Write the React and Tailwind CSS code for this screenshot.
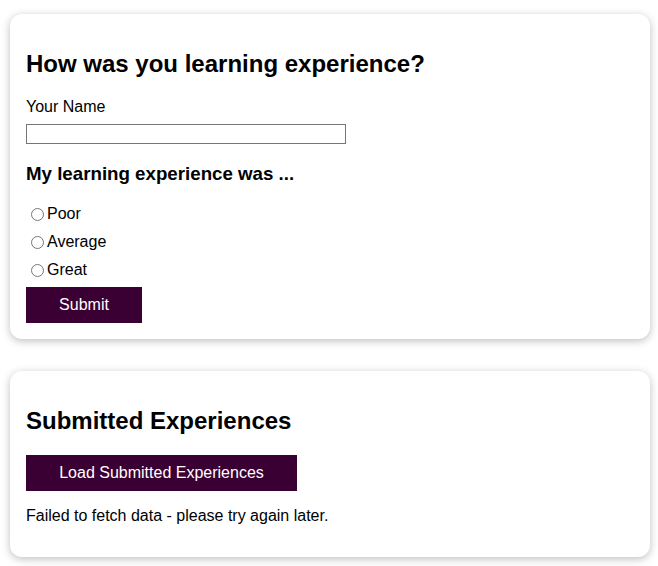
import React, { useState } from 'react';

const Card = ({ children, className = '' }) => (
  <section className={`rounded-xl bg-white px-4 pt-4 pb-4 shadow-[0_2px_8px_rgba(0,0,0,0.26)] ${className}`}>
    {children}
  </section>
);

const App = () => {
  const [name, setName] = useState('');
  const [rating, setRating] = useState('');

  return (
    <div className="min-h-[566px] bg-white pl-[10px] pr-[8px] pt-[14px] text-black font-['Liberation_Sans',Arial,sans-serif]">
      {/* FEEDBACK FORM */}
      <Card>
        <form onSubmit={e => e.preventDefault()}>
          <h2 className="mt-5 mb-5 text-2xl font-bold leading-[27.6px]">How was you learning experience?</h2>
          <label htmlFor="name" className="mb-2 block text-base leading-[18.4px]">Your Name</label>
          <input
            id="name"
            type="text"
            value={name}
            onChange={e => setName(e.target.value)}
            className="block h-5 w-[320px] border border-[#767676] px-0.5 text-sm outline-none"
          />
          <h3 className="mt-[18.7px] mb-4 text-[18.72px] font-bold leading-[21.5px]">My learning experience was ...</h3>
          {['Poor', 'Average', 'Great'].map(opt => (
            <div key={opt} className="flex h-7 items-center">
              <input
                type="radio"
                id={opt}
                name="rating"
                value={opt}
                checked={rating === opt}
                onChange={() => setRating(opt)}
                className="ml-[5px] mr-[3px] h-[13px] w-[13px]"
              />
              <label htmlFor={opt} className="text-base leading-[18.4px]">{opt}</label>
            </div>
          ))}
          <button className="mt-[3px] h-9 w-[116px] bg-[#3b0033] text-base text-white">Submit</button>
        </form>
      </Card>

      {/* SUBMITTED LIST */}
      <Card className="mt-8">
        <h2 className="mt-5 mb-5 text-2xl font-bold leading-[27.6px]">Submitted Experiences</h2>
        <button className="h-9 w-[271px] bg-[#3b0033] text-base text-white">Load Submitted Experiences</button>
        <p className="mt-4 mb-4 text-base leading-[18.4px]">Failed to fetch data - please try again later.</p>
      </Card>
    </div>
  );
};

export default App;
